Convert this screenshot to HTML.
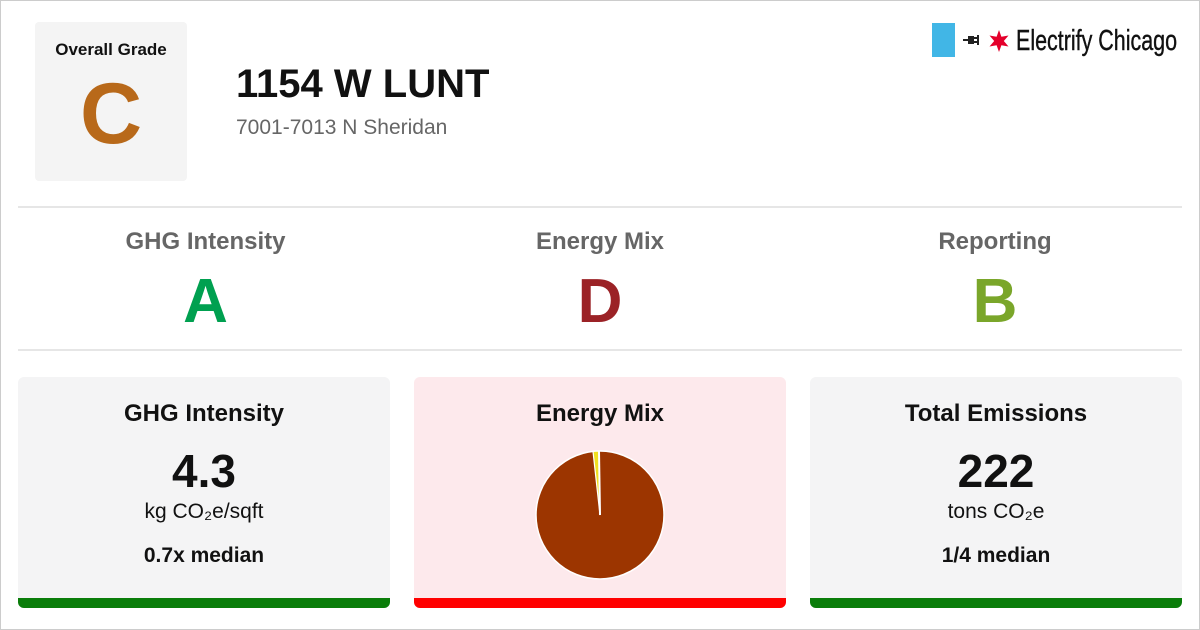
<!DOCTYPE html>
<html><head><meta charset="utf-8"><style>
*{margin:0;padding:0;box-sizing:border-box}
body{width:1200px;height:630px;background:#fff;font-family:"Liberation Sans",Arial,sans-serif;position:relative;overflow:hidden}
.frame{position:absolute;left:0;top:0;width:1200px;height:630px;border:1px solid #ccc}
.abs{position:absolute}
.c{text-align:center;font-weight:bold}
.card{position:absolute;top:377px;height:231px;width:372px;background:#f4f4f5;border-radius:6px;overflow:hidden}
.card .bar{position:absolute;left:0;right:0;bottom:0;height:10px}
.t{position:absolute;left:0;right:0;text-align:center}
</style></head><body>
<div class="frame"></div>
<div class="abs" style="left:35px;top:22px;width:152px;height:159px;background:#f4f4f4;border-radius:4px">
 <div class="t" style="top:18px;font-size:17px;font-weight:bold;color:#111">Overall Grade</div>
 <div class="t" style="top:42px;font-size:86px;font-weight:bold;color:#b8691a;line-height:100px">C</div>
</div>
<div class="abs" style="left:236px;top:62px;font-size:40px;font-weight:bold;color:#111">1154 W LUNT</div>
<div class="abs" style="left:236px;top:116px;font-size:21px;color:#666">7001-7013 N Sheridan</div>
<div class="abs" style="left:932px;top:23px;width:23px;height:34px;background:#41b6e6"></div>
<svg class="abs" style="left:962px;top:32px" width="24" height="16" viewBox="0 0 24 16"><path d="M1 8h5M12 6h4M12 10h4M16 3v10" stroke="#222" stroke-width="2" fill="none"/><path d="M6 4h6v8H6z" fill="#222"/></svg>
<svg class="abs" style="left:987px;top:29px" width="24" height="24" viewBox="-12 -12 24 24"><polygon fill="#e4002b" points="0,-11 2.4,-4.2 9.5,-5.5 4.8,0 9.5,5.5 2.4,4.2 0,11 -2.4,4.2 -9.5,5.5 -4.8,0 -9.5,-5.5 -2.4,-4.2"/></svg>
<div class="abs" style="left:1016px;top:25px;font-size:29px;color:#111;transform:scaleX(0.74);transform-origin:left;white-space:nowrap;-webkit-text-stroke:0.4px #111">Electrify Chicago</div>
<div class="abs" style="left:18px;top:206px;width:1164px;height:2px;background:#e6e6e6"></div>
<div class="abs" style="left:18px;top:349px;width:1164px;height:2px;background:#e6e6e6"></div>
<div class="abs c" style="left:18px;width:375px;top:228px;font-size:24px;color:#666">GHG Intensity</div>
<div class="abs c" style="left:412px;width:376px;top:228px;font-size:24px;color:#666">Energy Mix</div>
<div class="abs c" style="left:807px;width:376px;top:228px;font-size:24px;color:#666">Reporting</div>
<div class="abs c" style="left:18px;width:375px;top:266px;font-size:62px;color:#00a050">A</div>
<div class="abs c" style="left:412px;width:376px;top:266px;font-size:62px;color:#9b2226">D</div>
<div class="abs c" style="left:807px;width:376px;top:266px;font-size:62px;color:#7aa62a">B</div>

<div class="card" style="left:18px">
 <div class="t" style="top:23px;font-size:24px;font-weight:bold;color:#111">GHG Intensity</div>
 <div class="t" style="top:67px;font-size:46px;font-weight:bold;color:#111">4.3</div>
 <div class="t" style="top:123px;font-size:21px;color:#111">kg CO₂e/sqft</div>
 <div class="t" style="top:167px;font-size:21px;font-weight:bold;color:#111">0.7x median</div>
 <div class="bar" style="background:#0a7d0a"></div>
</div>
<div class="card" style="left:414px;background:#fde9ec">
 <div class="t" style="top:23px;font-size:24px;font-weight:bold;color:#111">Energy Mix</div>
 <svg style="position:absolute;left:119px;top:71px" width="134" height="134" viewBox="-67 -67 134 134">
  <circle r="64" fill="#9c3500" stroke="#fff" stroke-width="1.5"/>
  <path d="M0 0L-7 -63.6A64 64 0 0 1 -1 -64Z" fill="#f0e020" stroke="#fff" stroke-width="1.2"/>
  <path d="M0 0L-1 -64" stroke="#fff" stroke-width="2"/>
 </svg>
 <div class="bar" style="background:#f00"></div>
</div>
<div class="card" style="left:810px;width:372px">
 <div class="t" style="top:23px;font-size:24px;font-weight:bold;color:#111">Total Emissions</div>
 <div class="t" style="top:67px;font-size:46px;font-weight:bold;color:#111">222</div>
 <div class="t" style="top:123px;font-size:21px;color:#111">tons CO₂e</div>
 <div class="t" style="top:167px;font-size:21px;font-weight:bold;color:#111">1/4 median</div>
 <div class="bar" style="background:#0a7d0a"></div>
</div>
</body></html>
